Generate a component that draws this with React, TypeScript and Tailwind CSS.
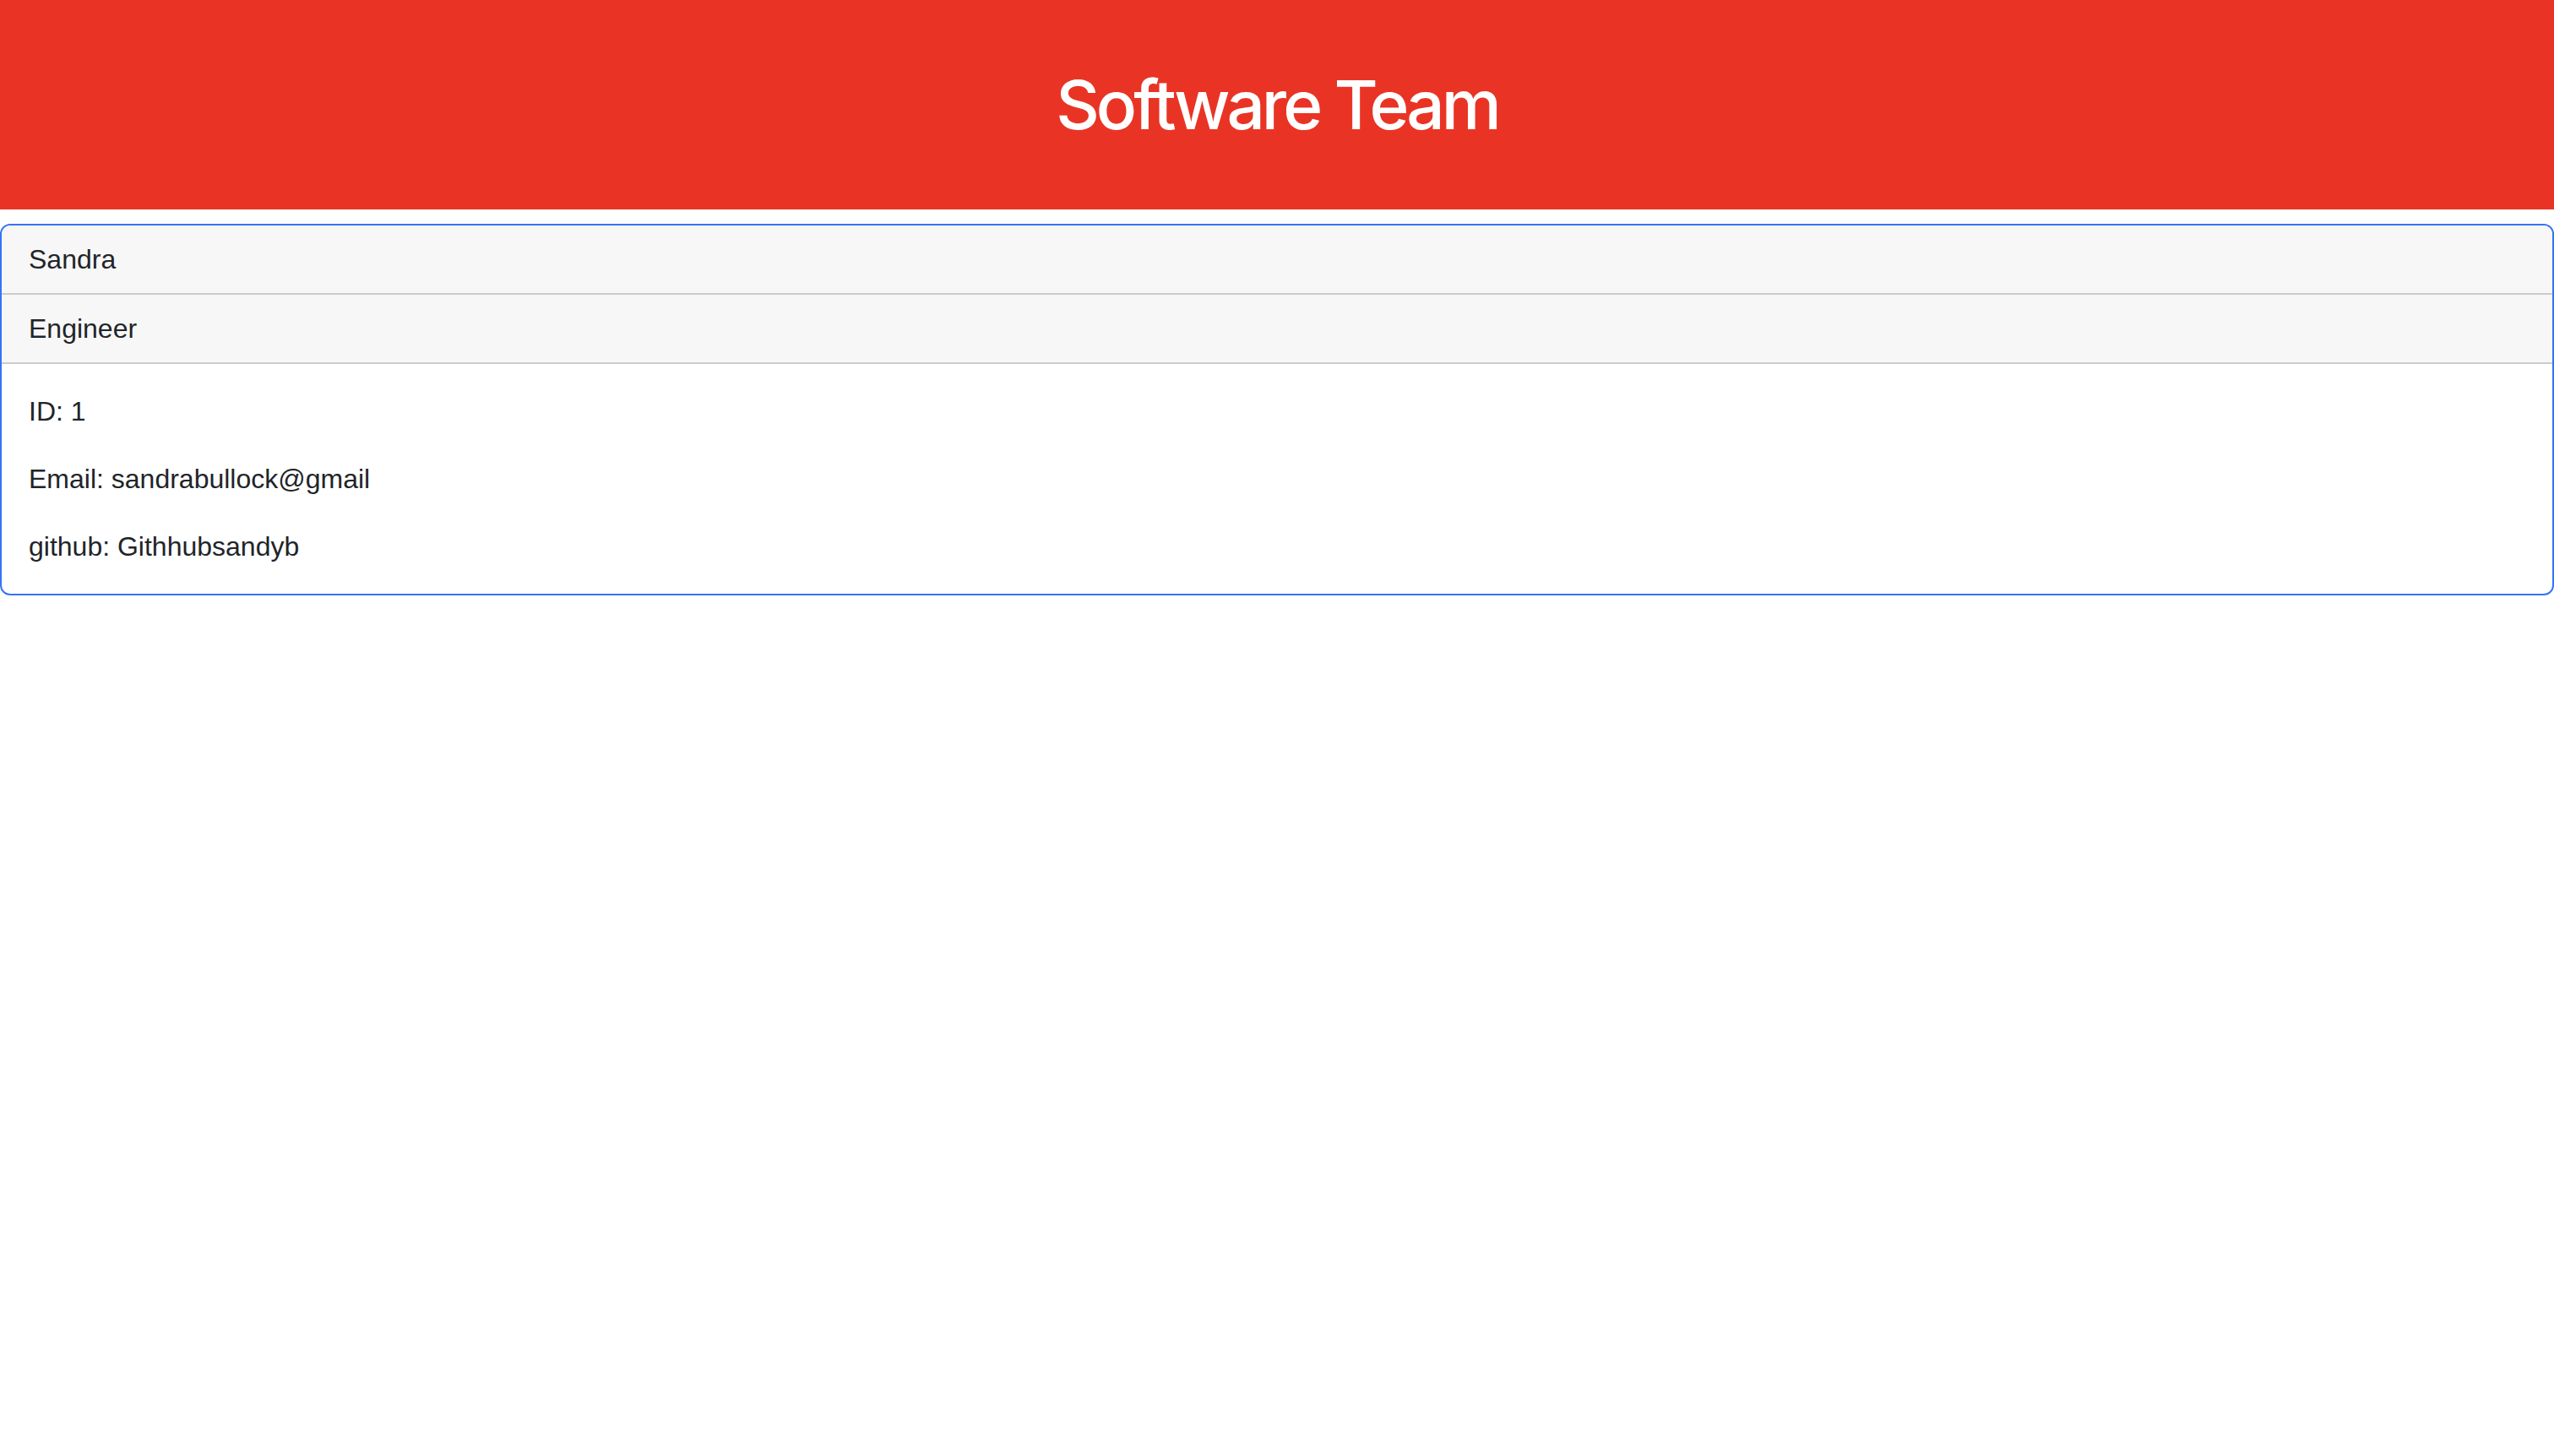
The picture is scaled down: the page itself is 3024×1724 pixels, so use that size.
export default function App() {
  const font = { fontFamily: '"Liberation Sans", Arial, sans-serif' };
  return (
    <div className="min-h-screen bg-white text-[#212529]" style={font}>
      <div className="h-[248px] bg-[#e93425] flex items-center justify-center">
        <h1
          className="text-[80px] leading-[1.2] font-medium text-white tracking-[-4px]"
          style={{ fontFamily: 'Inter, "Liberation Sans", sans-serif' }}
        >
          Software Team
        </h1>
      </div>
      <div className="mt-[17px] border-2 border-[#3574f5] rounded-[12px] overflow-hidden">
        <div className="bg-[#f7f7f7] border-b-2 border-[#cbcbcb] px-[32px] py-[16px] text-[32px] leading-[48px]">Sandra</div>
        <div className="bg-[#f7f7f7] border-b-2 border-[#cbcbcb] px-[32px] py-[16px] text-[32px] leading-[48px]">Engineer</div>
        <div className="p-[32px] text-[32px] leading-[48px] flex flex-col gap-[32px]">
          <p>ID: 1</p>
          <p>Email: sandrabullock@gmail</p>
          <p>github: Githhubsandyb</p>
        </div>
      </div>
    </div>
  );
}
